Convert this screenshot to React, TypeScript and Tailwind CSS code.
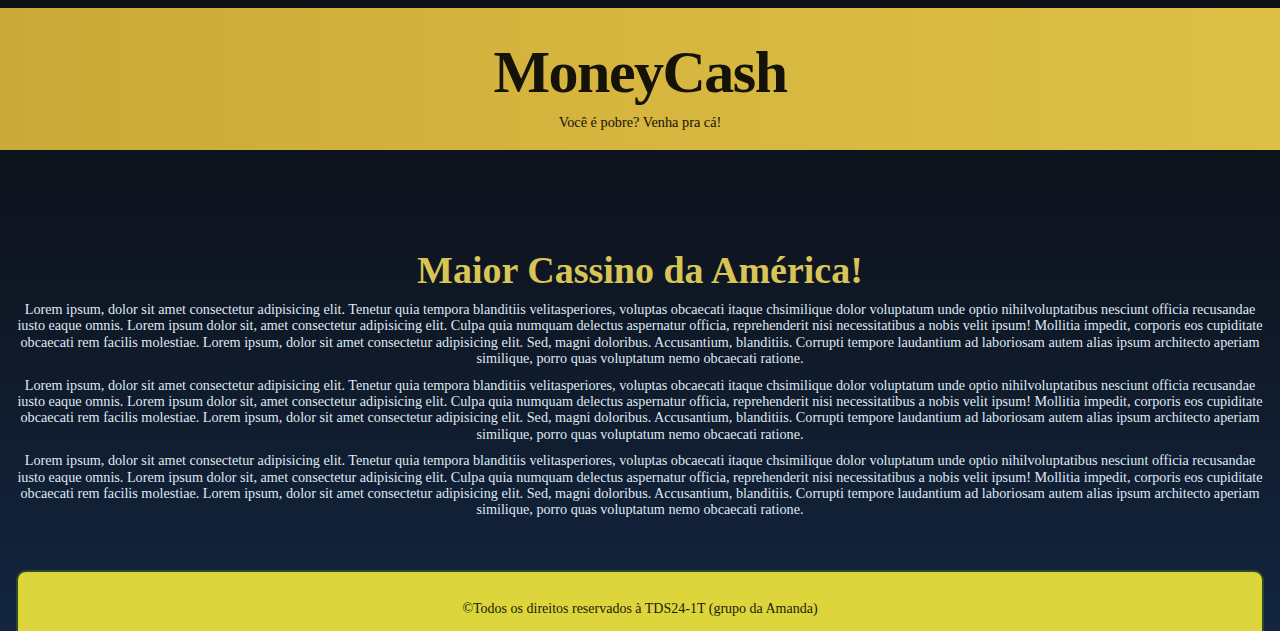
import React from 'react';

const texto =
  'Lorem ipsum, dolor sit amet consectetur adipisicing elit. Tenetur quia tempora blanditiis velitasperiores, voluptas obcaecati itaque chsimilique dolor voluptatum unde optio nihilvoluptatibus nesciunt officia recusandae iusto eaque omnis. Lorem ipsum dolor sit, amet consectetur adipisicing elit. Culpa quia numquam delectus aspernatur officia, reprehenderit nisi necessitatibus a nobis velit ipsum! Mollitia impedit, corporis eos cupiditate obcaecati rem facilis molestiae. Lorem ipsum, dolor sit amet consectetur adipisicing elit. Sed, magni doloribus. Accusantium, blanditiis. Corrupti tempore laudantium ad laboriosam autem alias ipsum architecto aperiam similique, porro quas voluptatum nemo obcaecati ratione.';

const App: React.FC = () => {
  return (
    <div className="h-[631px] overflow-hidden flex flex-col bg-gradient-to-b from-[#0c0f15] via-[#0f1826] to-[#132540] font-['Liberation_Serif',serif] pt-2">
      <header className="h-[142px] flex flex-col items-center bg-gradient-to-r from-[#c9aa38] via-[#d6b63e] to-[#dcc046] text-[#151208]">
        <h1 className="mt-[30px] text-[60px] leading-[68px] font-bold tracking-tight">MoneyCash</h1>
        <p className="mt-[6px] text-[14.3px]">Você é pobre? Venha pra cá!</p>
      </header>

      <main className="flex-1 flex flex-col items-center pt-[99px] px-[15px]">
        <h2 className="text-[38px] leading-[42px] font-bold text-[#d8c555]">Maior Cassino da América!</h2>
        <div className="mt-[10px] flex flex-col gap-[10px] text-center text-[14.2px] leading-[16.4px] text-[#dfe9f3]">
          <p>{texto}</p>
          <p>{texto}</p>
          <p>{texto}</p>
        </div>
      </main>

      <footer className="mx-[16px] mb-[-8px] h-[69px] rounded-t-[10px] border-2 border-[#2d4a22] bg-[#dcd53c] flex items-start justify-center pt-[26px]">
        <p className="text-[14px] text-[#23200a]">©Todos os direitos reservados à TDS24-1T (grupo da Amanda)</p>
      </footer>
    </div>
  );
};

export default App;
